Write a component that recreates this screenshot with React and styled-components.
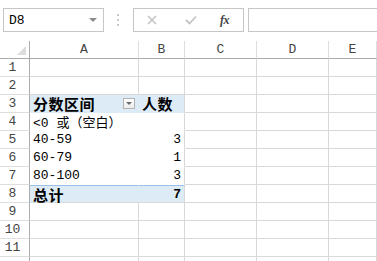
import React from "react";
import styled, { createGlobalStyle } from "styled-components";

const GlobalStyle = createGlobalStyle`
  html, body {
    margin: 0;
    padding: 0;
    background: #ffffff;
    overflow: hidden;
  }
`;

const Window = styled.div`
  width: 377px;
  height: 261px;
  font-family: "Liberation Mono", "Noto Sans CJK SC", monospace;
  font-size: 13px;
  color: #000;
  overflow: hidden;
`;

const FormulaBar = styled.div`
  height: 41px;
  display: flex;
  align-items: flex-start;
  padding: 8px 0 0 3px;
  box-sizing: border-box;
`;

const NameBox = styled.div`
  width: 101px;
  height: 24px;
  box-sizing: border-box;
  border: 1px solid #c6c6c6;
  display: flex;
  align-items: center;
  justify-content: space-between;
  padding: 0 6px 0 5px;
  font-size: 13px;
`;

const Caret = styled.span`
  width: 0;
  height: 0;
  border-left: 4px solid transparent;
  border-right: 4px solid transparent;
  border-top: 4px solid #8a8a8a;
`;

const Grip = styled.div`
  width: 2px;
  height: 24px;
  margin: 0 14px 0 13px;
  display: flex;
  flex-direction: column;
  justify-content: center;
  gap: 3px;
  & > span {
    width: 2px;
    height: 2px;
    background: #c8c8c8;
  }
`;

const ButtonBox = styled.div`
  width: 111px;
  height: 24px;
  box-sizing: border-box;
  border: 1px solid #c6c6c6;
  display: flex;
  align-items: center;
  padding: 0 0 0 13px;
`;

const ToolIcon = styled.span`
  width: ${(p) => p.$w}px;
  display: flex;
  align-items: center;
`;

const Fx = styled.span`
  font-family: "Liberation Serif", serif;
  font-style: italic;
  font-weight: bold;
  font-size: 12px;
  color: #444;
  letter-spacing: -0.5px;
`;

const FormulaInput = styled.div`
  flex: 1;
  height: 24px;
  margin-left: 4px;
  box-sizing: border-box;
  border: 1px solid #c6c6c6;
  border-right: none;
`;

const Sheet = styled.div`
  display: grid;
  grid-template-columns: 30px 109px 46px 72px 72px 48px;
  grid-auto-rows: 18px;
`;

const ColHead = styled.div`
  box-sizing: border-box;
  border-right: 1px solid ${(p) => (p.$corner ? "#ababab" : "#dedede")};
  border-bottom: 1px solid #ababab;
  display: flex;
  align-items: center;
  justify-content: center;
  color: #444;
  font-size: 13px;
  position: relative;
`;

const CornerMark = styled.span`
  position: absolute;
  right: 3px;
  bottom: 3px;
  width: 0;
  height: 0;
  border-left: 9px solid transparent;
  border-bottom: 9px solid #dcdcdc;
`;

const RowHead = styled.div`
  box-sizing: border-box;
  border-right: 1px solid #ababab;
  border-bottom: 1px solid #dedede;
  display: flex;
  align-items: center;
  justify-content: center;
  padding-right: 4px;
  color: #444;
  font-size: 13px;
`;

const Cell = styled.div`
  box-sizing: border-box;
  border-right: 1px solid ${(p) => (p.$noRight ? "transparent" : "#d9d9d9")};
  border-bottom: 1px solid ${(p) => (p.$noBottom ? "transparent" : "#d9d9d9")};
  border-top: ${(p) => (p.$topLine ? "1px solid #9bc2e6" : "none")};
  background: ${(p) => (p.$band ? "#ddebf7" : "#ffffff")};
  display: flex;
  align-items: center;
  justify-content: ${(p) => (p.$right ? "flex-end" : "space-between")};
  padding: 0 3px;
  font-weight: ${(p) => (p.$bold ? "bold" : "normal")};
  white-space: nowrap;
  overflow: visible;
`;

const Han = styled.span`
  font-family: "Noto Sans CJK SC", sans-serif;
  font-size: ${(p) => (p.$big ? 15 : 13)}px;
  letter-spacing: ${(p) => (p.$big ? 0.5 : 0)}px;
`;

const FilterButton = styled.span`
  width: 12px;
  height: 11px;
  box-sizing: border-box;
  border: 1px solid #b4b4b4;
  background: linear-gradient(#ffffff, #ececec);
  display: flex;
  align-items: center;
  justify-content: center;
  &::after {
    content: "";
    border-left: 3px solid transparent;
    border-right: 3px solid transparent;
    border-top: 3px solid #6a6a6a;
  }
`;

const rows = [
  { n: 1 },
  { n: 2 },
  { n: 3, kind: "head" },
  { n: 4, a: ["<0 ", "或（空白）"], pivot: true },
  { n: 5, a: "40-59", b: "3", pivot: true },
  { n: 6, a: "60-79", b: "1", pivot: true },
  { n: 7, a: "80-100", b: "3", pivot: true },
  { n: 8, kind: "total" },
  { n: 9 },
  { n: 10 },
  { n: 11 },
  { n: 12, hidden: true },
];

const Row = ({ r }) => {
  const rest = (
    <>
      <Cell />
      <Cell />
      <Cell />
    </>
  );
  if (r.kind === "head") {
    return (
      <>
        <RowHead>{r.n}</RowHead>
        <Cell $band $bold $noRight $noBottom>
          <Han $big>分数区间</Han>
          <FilterButton />
        </Cell>
        <Cell $band $bold $noBottom>
          <Han $big>人数</Han>
        </Cell>
        {rest}
      </>
    );
  }
  if (r.kind === "total") {
    return (
      <>
        <RowHead>{r.n}</RowHead>
        <Cell $band $bold $topLine $noRight>
          <Han $big>总计</Han>
        </Cell>
        <Cell $band $bold $right $topLine>
          7
        </Cell>
        {rest}
      </>
    );
  }
  if (r.pivot) {
    return (
      <>
        <RowHead>{r.n}</RowHead>
        <Cell $noRight $noBottom>
          {Array.isArray(r.a) ? (
            <span>
              {r.a[0]}
              <Han>{r.a[1]}</Han>
            </span>
          ) : (
            r.a
          )}
        </Cell>
        <Cell $right $noBottom>
          {r.b}
        </Cell>
        {rest}
      </>
    );
  }
  return (
    <>
      <RowHead>{r.hidden ? "" : r.n}</RowHead>
      <Cell />
      <Cell />
      {rest}
    </>
  );
};

const App = () => (
  <Window>
    <GlobalStyle />
    <FormulaBar>
      <NameBox>
        <span>D8</span>
        <Caret />
      </NameBox>
      <Grip>
        <span />
        <span />
        <span />
      </Grip>
      <ButtonBox>
        <ToolIcon $w={38}>
          <svg width="10" height="10" viewBox="0 0 10 10">
            <path d="M1 1 L9 9 M9 1 L1 9" stroke="#c4c4c4" strokeWidth="1.6" />
          </svg>
        </ToolIcon>
        <ToolIcon $w={35}>
          <svg width="12" height="10" viewBox="0 0 12 10">
            <path d="M1 5 L4.5 8.5 L11 1.5" stroke="#c4c4c4" strokeWidth="1.8" fill="none" />
          </svg>
        </ToolIcon>
        <ToolIcon $w={20}>
          <Fx>fx</Fx>
        </ToolIcon>
      </ButtonBox>
      <FormulaInput />
    </FormulaBar>
    <Sheet>
      <ColHead $corner>
        <CornerMark />
      </ColHead>
      <ColHead>A</ColHead>
      <ColHead>B</ColHead>
      <ColHead>C</ColHead>
      <ColHead>D</ColHead>
      <ColHead>E</ColHead>
      {rows.map((r) => (
        <Row key={r.n} r={r} />
      ))}
    </Sheet>
  </Window>
);

export default App;
